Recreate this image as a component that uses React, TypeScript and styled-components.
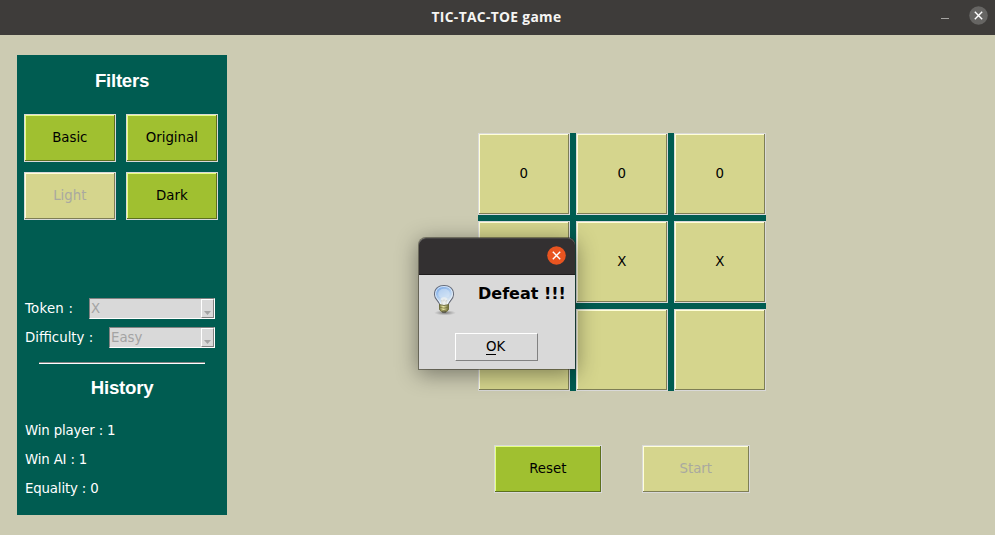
import React from "react";
import styled, { createGlobalStyle, css } from "styled-components";

const Global = createGlobalStyle`
  * { box-sizing: border-box; }
  body { margin: 0; overflow: hidden; }
  button { font: inherit; padding: 0; margin: 0; }
`;

const Window = styled.div`
  position: relative;
  width: 995px;
  height: 535px;
  background: #cccbb2;
  font: 13.33px/16px "DejaVu Sans", sans-serif;
  color: #000;
  white-space: nowrap;
`;

const TitleBar = styled.header`
  display: grid;
  grid-template-columns: 1fr 132px 1fr;
  align-items: center;
  height: 35px;
  background: #3e3c3a;
  color: #f5f5f3;
`;

const Title = styled.h1`
  grid-column: 2;
  margin: 0;
  padding: 0 2px 2px 0;
  text-align: center;
  font: bold 13.8px/32px "Open Sans", "Noto Sans", sans-serif;
  letter-spacing: 0.33px;
`;

const WindowControls = styled.div`
  display: flex;
  justify-content: flex-end;
  align-items: center;
  height: 35px;
  padding: 0 7px 4px 0;
  gap: 20px;
`;

const Minimize = styled.span`
  width: 8px;
  height: 1px;
  margin-top: 6px;
  background: #a5a4a2;
`;

const Content = styled.main`
  display: flex;
  height: 500px;
  padding: 20px 0 0 17px;
`;

const Sidebar = styled.aside`
  width: 210px;
  height: 460px;
  background: #005c51;
  color: #fff;
`;

const Heading = styled.h2<{ $space: number }>`
  margin: 0;
  height: ${(p) => p.$space}px;
  padding-top: 1px;
  text-align: center;
  font: bold 18.67px/22px "Liberation Sans", Arial, sans-serif;
  letter-spacing: -0.25px;
`;

const tones = {
  green: { face: "#a0c030", light: "#e6ff86", dark: "#5c701d", text: "#000" },
  sand: { face: "#d5d58d", light: "#ffffd8", dark: "#7e7e55", text: "#000" },
  disabled: { face: "#d5d58d", light: "#ffffd8", dark: "#7e7e55", text: "#a9a9a0" },
};

const TkButton = styled.button<{ $tone: keyof typeof tones; $w: number; $h: number }>`
  display: flex;
  align-items: center;
  justify-content: center;
  width: ${(p) => p.$w}px;
  height: ${(p) => p.$h}px;
  padding-right: 0.4px;
  border: 1px solid #d9d9d9;
  border-radius: 0;
  ${({ $tone }) => {
    const t = tones[$tone];
    return css`
      background: ${t.face};
      color: ${t.text};
      box-shadow: inset -1px -1px ${t.dark}, inset 1px 1px ${t.light};
    `;
  }}
`;

const FilterGrid = styled.div`
  display: grid;
  grid-template-columns: 92px 92px;
  gap: 10px;
  padding-left: 7px;
  margin-bottom: 78px;
`;

const Field = styled.div`
  display: flex;
  justify-content: space-between;
  height: 21px;
  margin: 0 12px 8px 8px;
  line-height: 20px;
`;

const FieldLabel = styled.span<{ $spacing: number }>`
  padding-top: 1px;
  letter-spacing: ${(p) => p.$spacing}px;
`;

const Combo = styled.div<{ $w: number }>`
  display: flex;
  justify-content: space-between;
  width: ${(p) => p.$w}px;
  height: 21px;
  padding-left: 1px;
  border: 1px solid;
  border-color: #828282 #fff #fff #828282;
  background: #d9d9d9;
  color: #a3a3a3;
`;

const ComboArrow = styled.span`
  display: flex;
  align-items: flex-end;
  justify-content: center;
  width: 13px;
  height: 19px;
  padding-bottom: 2px;
  border: 1px solid;
  border-color: #fff #828282 #828282 #fff;
`;

const Separator = styled.div`
  width: 166px;
  height: 2px;
  margin: 14px 0 12px 22px;
  border-top: 1px solid #828282;
  background: #fff;
`;

const Stat = styled.div`
  height: 29px;
  padding-left: 8px;
  letter-spacing: -0.16px;
`;

const Game = styled.section`
  margin: 78px 0 0 251px;
`;

const Board = styled.div`
  display: grid;
  grid-template-columns: repeat(3, 92px);
  gap: 6px;
  width: 288px;
  background: #005c51;
`;

const Actions = styled.div`
  display: flex;
  gap: 40px;
  margin: 54px 0 0 16px;
`;

const Dialog = styled.div`
  position: absolute;
  left: 418px;
  top: 237px;
  width: 158px;
  height: 133px;
  border: 1px solid rgba(45, 43, 35, 0.5);
  border-radius: 8px 8px 0 0;
  background: #d9d9d9;
  background-clip: padding-box;
  box-shadow: 0 4px 22px rgba(0, 0, 0, 0.42);
`;

const DialogBar = styled.div`
  display: flex;
  justify-content: flex-end;
  height: 37px;
  padding: 7px 9px 0 0;
  border-radius: 7px 7px 0 0;
  border-top: 1px solid #454343;
  border-bottom: 1px solid #1f1d1d;
  background: #333031;
`;

const DialogBody = styled.div`
  display: flex;
  height: 58px;
  padding: 8px 0 0 12px;
`;

const Message = styled.strong`
  margin: 1px 0 0 19px;
  font-size: 16px;
  line-height: 20px;
`;

const OkButton = styled.button`
  display: block;
  width: 83px;
  height: 28px;
  margin-left: 36px;
  padding: 0 2px 0 0;
  border: 1px solid;
  border-color: #fff #828282 #828282 #fff;
  background: #d9d9d9;
`;

const Mnemonic = styled.span`
  display: inline-block;
  height: 16px;
  border-bottom: 1px solid #000;
`;

function CloseIcon({ fill, size }: { fill: string; size: number }) {
  return (
    <svg width={size} height={size} viewBox="0 0 19 19">
      <circle cx="9.5" cy="9.5" r="9.3" fill={fill} />
      <path d="M5.8 5.8l7.4 7.4M13.2 5.8l-7.4 7.4" stroke="#fff" strokeWidth="1.4" />
    </svg>
  );
}

function Bulb() {
  return (
    <svg width="28" height="34" viewBox="0 0 28 34">
      <defs>
        <radialGradient id="shade">
          <stop offset="0" stopColor="#555" stopOpacity=".75" />
          <stop offset="1" stopColor="#777" stopOpacity="0" />
        </radialGradient>
        <linearGradient id="glass" x1="0" y1="0" x2="0.5" y2="1">
          <stop offset="0" stopColor="#6c9fe4" />
          <stop offset=".6" stopColor="#b4d0f0" />
          <stop offset="1" stopColor="#edf0f1" />
        </linearGradient>
        <linearGradient id="brass">
          <stop offset="0" stopColor="#77753a" />
          <stop offset=".4" stopColor="#f0efae" />
          <stop offset="1" stopColor="#686637" />
        </linearGradient>
      </defs>
      <ellipse cx="14" cy="29.8" rx="11" ry="2.6" fill="url(#shade)" />
      <path
        d="M9 23C9 18 3.5 17 3.5 11.5C3.5 5.5 7.7 2.5 13 2.5S22.5 5.5 22.5 11.5C22.5 17 17 18 17 23Z"
        fill="url(#glass)" stroke="#666b78" strokeWidth="1.1"
      />
      <path
        d="M9.8 21.5C9.5 17.5 4.5 16 4.5 11.5C4.5 6.5 8 3.5 13 3.5S21.5 6.5 21.5 11.5C21.5 16 16.5 17.5 16.2 21.5"
        fill="none" stroke="#f4f9ff" strokeWidth=".7"
      />
      <ellipse cx="13" cy="10.8" rx="5.8" ry="5" fill="#dce9f8" opacity=".5" />
      <path d="M9.5 15.5Q13 13 16.5 15.5L15.5 22H10.5Z" fill="#f4f4f0" opacity=".7" />
      <path d="M11.5 23L10.5 17L12 18.5L13 16.5L14.3 18.5L15.7 17L14.5 23" fill="none" stroke="#c8c8c0" strokeWidth=".5" />
      <path d="M8.5 21.5Q13 23.5 17.5 21.5V26.5Q16.5 29 13 29T8.5 26.5Z" fill="url(#brass)" stroke="#65632f" strokeWidth=".8" />
      <path d="M8.7 24.3Q13 26 17.3 24.3M9 26.8Q13 28.3 17 26.8" fill="none" stroke="#77743c" strokeWidth=".8" />
      <path d="M11 28.5H15V29.5H11Z" fill="#403f38" />
    </svg>
  );
}

function Select({ value, width }: { value: string; width: number }) {
  return (
    <Combo $w={width}>
      {value}
      <ComboArrow>
        <svg width="7" height="4" viewBox="0 0 7 4">
          <path d="M0 0H7L3.5 4Z" fill="#a3a3a3" />
        </svg>
      </ComboArrow>
    </Combo>
  );
}

const HeadingTop = styled.div`
  height: 14px;
`;

const Stats = styled.div`
  padding-top: 5px;
`;

const filters = [
  ["Basic", false],
  ["Original", false],
  ["Light", true],
  ["Dark", false],
] as const;
const cells = ["0", "0", "0", "", "X", "X", "", "", ""];

export default function App() {
  return (
    <Window>
      <Global />
      <TitleBar>
        <Title>TIC-TAC-TOE game</Title>
        <WindowControls>
          <Minimize />
          <CloseIcon fill="#666563" size={19} />
        </WindowControls>
      </TitleBar>
      <Content>
        <Sidebar>
          <HeadingTop />
          <Heading $space={45}>Filters</Heading>
          <FilterGrid>
            {filters.map(([name, off]) => (
              <TkButton key={name} $tone={off ? "disabled" : "green"} $w={92} $h={48}>
                {name}
              </TkButton>
            ))}
          </FilterGrid>
          <Field>
            <FieldLabel $spacing={0.22}>Token :</FieldLabel>
            <Select value="X" width={126} />
          </Field>
          <Field>
            <FieldLabel $spacing={0}>Difficulty :</FieldLabel>
            <Select value="Easy" width={106} />
          </Field>
          <Separator />
          <Heading $space={42}>History</Heading>
          <Stats>
            <Stat>Win player : 1</Stat>
            <Stat>Win AI : 1</Stat>
            <Stat>Equality : 0</Stat>
          </Stats>
        </Sidebar>
        <Game>
          <Board>
            {cells.map((c, i) => (
              <TkButton key={i} $tone="sand" $w={92} $h={82}>
                {c}
              </TkButton>
            ))}
          </Board>
          <Actions>
            <TkButton $tone="green" $w={108} $h={48}>Reset</TkButton>
            <TkButton $tone="disabled" $w={108} $h={48}>Start</TkButton>
          </Actions>
        </Game>
      </Content>
      <Dialog>
        <DialogBar>
          <CloseIcon fill="#e95420" size={19} />
        </DialogBar>
        <DialogBody>
          <Bulb />
          <Message>Defeat !!!</Message>
        </DialogBody>
        <OkButton>
          <Mnemonic>O</Mnemonic>K
        </OkButton>
      </Dialog>
    </Window>
  );
}
